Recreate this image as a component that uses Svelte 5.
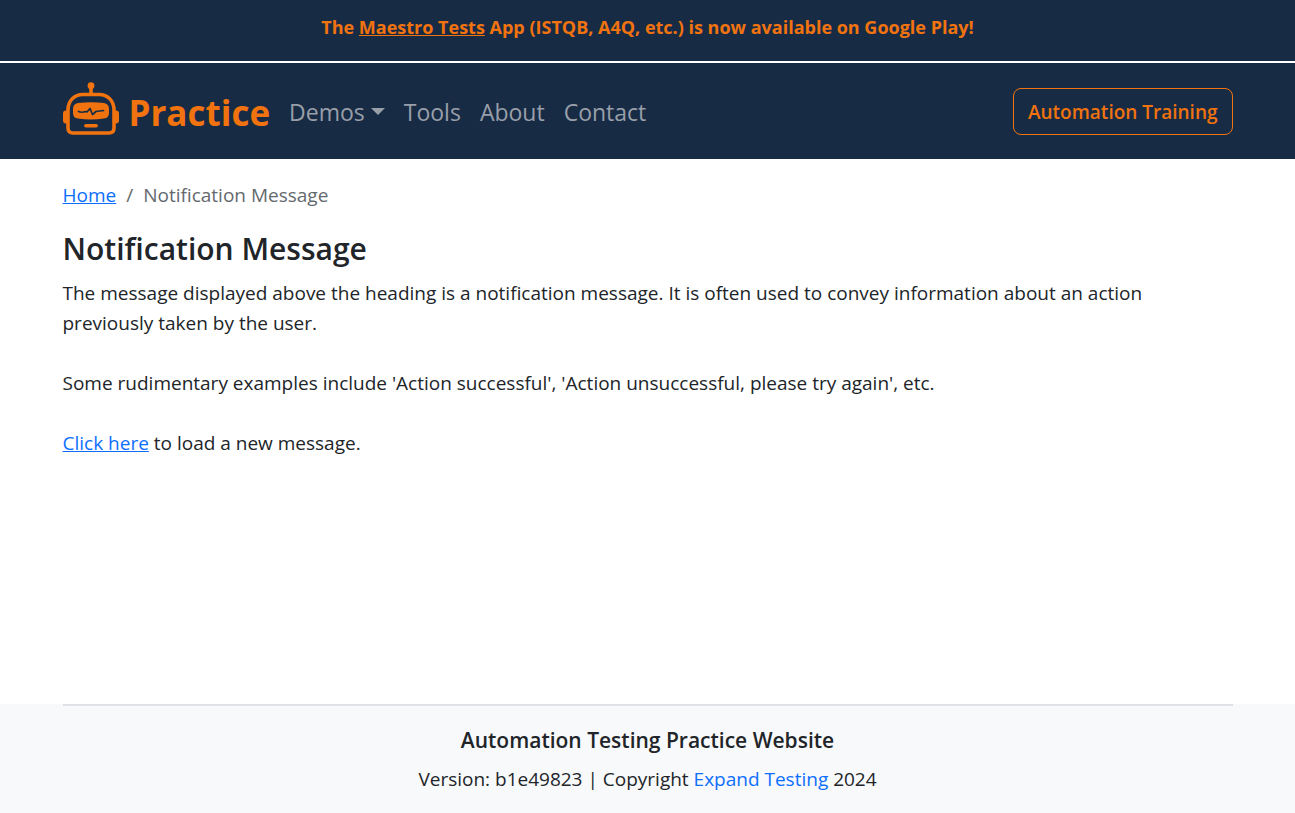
<script>
  const navLinks = ['Tools', 'About', 'Contact'];
</script>

<div class="page">
  <div class="announcement">
    The <a href="#maestro">Maestro Tests</a> App (ISTQB, A4Q, etc.) is now available on Google Play!
  </div>

  <header>
    <nav class="container navbar" aria-label="Main">
      <a class="brand" href="#home">
        <svg viewBox="0 0 56 56" fill="none" aria-hidden="true">
          <circle cx="28" cy="3.7" r="3.4" fill="currentColor" />
          <path d="M28 5v7" stroke="currentColor" stroke-width="3.6" />
          <path d="M4 28.500H3q-3 0-3 3v7q0 3 3 3h1zM52 28.500h1q3 0 3 3v7q0 3-3 3h-1z" fill="currentColor" />
          <path d="M20 12.500H36C45 12.500 51 19 51 28V46Q51 51 46 51H10Q5 51 5 46V28C5 19 11 12.500 20 12.500Z" stroke="currentColor" stroke-width="3.6" />
          <path d="M15 21Q28 19.500 41 21Q46 22 46 27V31Q46 36 41 36.500Q28 38.500 15 36.500Q10 36 10 31V27Q10 22 15 21Z" fill="currentColor" />
          <path class="pulse" d="M15.500 29.500Q19 31 22.500 29.500L24 30L27 26.500L29.500 32.500L33 29.500L40.500 28.500" stroke-width="1.700" stroke-linecap="round" stroke-linejoin="round" />
          <path d="M22.800 43.700H33.200" stroke="currentColor" stroke-width="3.400" stroke-linecap="round" />
        </svg>
        <span>Practice</span>
      </a>
      <div class="links">
        <button class="demos" type="button" aria-haspopup="true">Demos<span class="caret"></span></button>
        {#each navLinks as label}
          <a href={'#' + label.toLowerCase()}>{label}</a>
        {/each}
      </div>
      <a class="training" href="#training">Automation Training</a>
    </nav>
  </header>

  <main class="container">
    <nav class="breadcrumb" aria-label="Breadcrumb">
      <a href="#home">Home</a>
      <span>/</span>
      <span>Notification Message</span>
    </nav>
    <h1>Notification Message</h1>
    <p>The message displayed above the heading is a notification message. It is often used to convey information about an action previously taken by the user.</p>
    <p>Some rudimentary examples include 'Action successful', 'Action unsuccessful, please try again', etc.</p>
    <p><a href="#message">Click here</a> to load a new message.</p>
  </main>

  <footer>
    <div class="container">
      <div class="footer-body">
        <h2>Automation Testing Practice Website</h2>
        <div>Version: b1e49823 | Copyright <a href="#expand">Expand Testing</a> 2024</div>
      </div>
    </div>
  </footer>
</div>

<style>
  :global(body) {
    margin: 0;
  }
  .page {
    min-height: 100vh;
    display: flex;
    flex-direction: column;
    background: #fff;
    color: #212529;
    font-family: "Segoe UI", "Open Sans", "Noto Sans", sans-serif;
    font-size: 19px;
    line-height: 30px;
  }
  .container {
    box-sizing: border-box;
    width: 100%;
    max-width: 1200px;
    margin: 0 auto;
    padding: 0 15px;
  }
  .announcement {
    padding: 12px 16px 19px;
    border-bottom: 2px solid #fff;
    background: #182b45;
    color: #f0730f;
    font-size: 18px;
    font-weight: 700;
    text-align: center;
  }
  .announcement a {
    color: inherit;
  }
  header {
    background: #182b45;
  }
  .navbar {
    display: flex;
    align-items: center;
    min-height: 96px;
  }
  .brand {
    display: flex;
    align-items: center;
    gap: 10px;
    margin-right: 19px;
    color: #f0730f;
    font-size: 35px;
    font-weight: 700;
    line-height: 54px;
    text-decoration: none;
  }
  .brand svg {
    width: 56px;
    height: 56px;
    margin-bottom: 2px;
  }
  .brand span {
    padding-top: 4px;
  }
  .pulse {
    stroke: #182b45;
  }
  .links {
    display: flex;
    flex: 1;
    gap: 19px;
    padding-top: 2px;
    font-size: 23px;
  }
  .links a,
  .demos {
    padding: 0;
    border: 0;
    background: none;
    color: #989fa9;
    font: inherit;
    text-decoration: none;
  }
  .demos {
    display: flex;
    align-items: center;
    gap: 6px;
  }
  .caret {
    margin-bottom: 2px;
    border: 7px solid transparent;
    border-top-color: currentColor;
    border-bottom: 0;
  }
  .training {
    padding: 8px 14px 7px;
    border: 1px solid #f0730f;
    border-radius: 8px;
    color: #f0730f;
    font-weight: 600;
    text-decoration: none;
  }
  main {
    flex: 1;
  }
  main a,
  footer a {
    color: #0d6efd;
  }
  .breadcrumb {
    display: flex;
    gap: 10px;
    padding: 21px 0 20px;
    color: #64696e;
  }
  h1 {
    margin: 0 0 10px;
    font-size: 30px;
    font-weight: 600;
    line-height: 38px;
  }
  p {
    margin: 0 0 30px;
  }
  footer {
    background: #f8f9fa;
    text-align: center;
  }
  .footer-body {
    padding: 19px 0 19px;
    border-top: 2px solid #dee2e6;
  }
  h2 {
    margin: 0 0 9px;
    font-size: 21px;
    font-weight: 600;
    line-height: 30px;
  }
  footer a {
    text-decoration: none;
  }
</style>
